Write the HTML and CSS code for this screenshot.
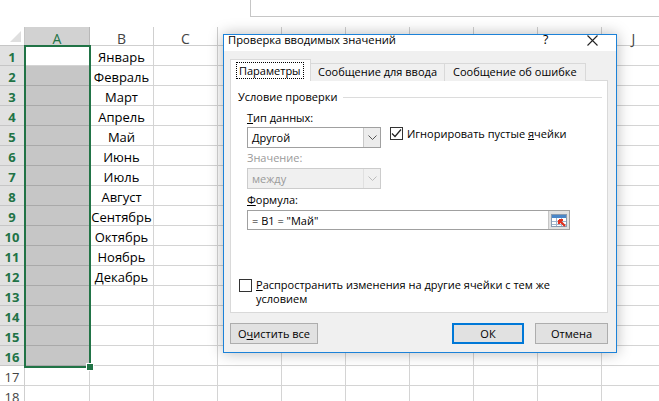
FILE: index.html
```html
<!DOCTYPE html>
<html lang="ru">
<head>
<meta charset="utf-8">
<title>Проверка вводимых значений</title>
<link rel="stylesheet" href="styles.css">
</head>
<body>
<div class="sheet">
  <div class="fbar-area"><div class="fbar"></div></div>
  <div class="grid">
    <div class="row hdr">
      <div class="corner"><span class="tri"></span></div>
      <div class="ch cola sel">A</div><div class="ch">B</div><div class="ch">C</div><div class="ch">D</div><div class="ch">E</div><div class="ch">F</div><div class="ch">G</div><div class="ch">H</div><div class="ch">I</div><div class="ch">J</div>
    </div>
    <div class="row"><div class="rh sel">1</div><div class="c cola"></div><div class="c b">Январь</div><div class="c"></div><div class="c"></div><div class="c"></div><div class="c"></div><div class="c"></div><div class="c"></div><div class="c"></div><div class="c"></div></div>
    <div class="row"><div class="rh sel">2</div><div class="c cola fill"></div><div class="c b">Февраль</div><div class="c"></div><div class="c"></div><div class="c"></div><div class="c"></div><div class="c"></div><div class="c"></div><div class="c"></div><div class="c"></div></div>
    <div class="row"><div class="rh sel">3</div><div class="c cola fill"></div><div class="c b">Март</div><div class="c"></div><div class="c"></div><div class="c"></div><div class="c"></div><div class="c"></div><div class="c"></div><div class="c"></div><div class="c"></div></div>
    <div class="row"><div class="rh sel">4</div><div class="c cola fill"></div><div class="c b">Апрель</div><div class="c"></div><div class="c"></div><div class="c"></div><div class="c"></div><div class="c"></div><div class="c"></div><div class="c"></div><div class="c"></div></div>
    <div class="row"><div class="rh sel">5</div><div class="c cola fill"></div><div class="c b">Май</div><div class="c"></div><div class="c"></div><div class="c"></div><div class="c"></div><div class="c"></div><div class="c"></div><div class="c"></div><div class="c"></div></div>
    <div class="row"><div class="rh sel">6</div><div class="c cola fill"></div><div class="c b">Июнь</div><div class="c"></div><div class="c"></div><div class="c"></div><div class="c"></div><div class="c"></div><div class="c"></div><div class="c"></div><div class="c"></div></div>
    <div class="row"><div class="rh sel">7</div><div class="c cola fill"></div><div class="c b">Июль</div><div class="c"></div><div class="c"></div><div class="c"></div><div class="c"></div><div class="c"></div><div class="c"></div><div class="c"></div><div class="c"></div></div>
    <div class="row"><div class="rh sel">8</div><div class="c cola fill"></div><div class="c b">Август</div><div class="c"></div><div class="c"></div><div class="c"></div><div class="c"></div><div class="c"></div><div class="c"></div><div class="c"></div><div class="c"></div></div>
    <div class="row"><div class="rh sel">9</div><div class="c cola fill"></div><div class="c b">Сентябрь</div><div class="c"></div><div class="c"></div><div class="c"></div><div class="c"></div><div class="c"></div><div class="c"></div><div class="c"></div><div class="c"></div></div>
    <div class="row"><div class="rh sel">10</div><div class="c cola fill"></div><div class="c b">Октябрь</div><div class="c"></div><div class="c"></div><div class="c"></div><div class="c"></div><div class="c"></div><div class="c"></div><div class="c"></div><div class="c"></div></div>
    <div class="row"><div class="rh sel">11</div><div class="c cola fill"></div><div class="c b">Ноябрь</div><div class="c"></div><div class="c"></div><div class="c"></div><div class="c"></div><div class="c"></div><div class="c"></div><div class="c"></div><div class="c"></div></div>
    <div class="row"><div class="rh sel">12</div><div class="c cola fill"></div><div class="c b">Декабрь</div><div class="c"></div><div class="c"></div><div class="c"></div><div class="c"></div><div class="c"></div><div class="c"></div><div class="c"></div><div class="c"></div></div>
    <div class="row"><div class="rh sel">13</div><div class="c cola fill"></div><div class="c b"></div><div class="c"></div><div class="c"></div><div class="c"></div><div class="c"></div><div class="c"></div><div class="c"></div><div class="c"></div><div class="c"></div></div>
    <div class="row"><div class="rh sel">14</div><div class="c cola fill"></div><div class="c b"></div><div class="c"></div><div class="c"></div><div class="c"></div><div class="c"></div><div class="c"></div><div class="c"></div><div class="c"></div><div class="c"></div></div>
    <div class="row"><div class="rh sel">15</div><div class="c cola fill"></div><div class="c b"></div><div class="c"></div><div class="c"></div><div class="c"></div><div class="c"></div><div class="c"></div><div class="c"></div><div class="c"></div><div class="c"></div></div>
    <div class="row"><div class="rh sel">16</div><div class="c cola fill last"></div><div class="c b"></div><div class="c"></div><div class="c"></div><div class="c"></div><div class="c"></div><div class="c"></div><div class="c"></div><div class="c"></div><div class="c"></div></div>
    <div class="row"><div class="rh">17</div><div class="c cola"></div><div class="c b"></div><div class="c"></div><div class="c"></div><div class="c"></div><div class="c"></div><div class="c"></div><div class="c"></div><div class="c"></div><div class="c"></div></div>
    <div class="row"><div class="rh">18</div><div class="c cola"></div><div class="c b"></div><div class="c"></div><div class="c"></div><div class="c"></div><div class="c"></div><div class="c"></div><div class="c"></div><div class="c"></div><div class="c"></div></div>
  </div>
  <div class="selection"><span class="handle"></span></div>

  <div class="dialog">
    <div class="titlebar">
      <span class="title">Проверка вводимых значений</span>
      <span class="help">?</span>
      <svg class="close" width="11" height="11" viewBox="0 0 11 11"><path d="M0.5 0.5 L10.5 10.5 M10.5 0.5 L0.5 10.5" stroke="#222" stroke-width="1.1" fill="none"/></svg>
    </div>
    <div class="body">
      <div class="tabs">
        <div class="tab active"><span class="focus">Параметры</span></div>
        <div class="tab t2">Сообщение для ввода</div>
        <div class="tab t3">Сообщение об ошибке</div>
      </div>
      <div class="panel">
        <div class="group-title"><span>Условие проверки</span><span class="gline"></span></div>
        <div class="fields">
          <div class="lbl"><u>Т</u>ип данных:</div>
          <div class="line1">
            <div class="select"><span class="val">Другой</span><span class="dd"><svg width="9" height="5" viewBox="0 0 9 5"><path d="M0.5 0.5 L4.5 4.5 L8.5 0.5" stroke="#555" stroke-width="1" fill="none"/></svg></span></div>
            <div class="chk-row"><span class="chk"><svg width="11" height="11" viewBox="0 0 11 11"><path d="M1 5.5 L4 8.5 L10 1.5" stroke="#222" stroke-width="1.2" fill="none"/></svg></span><span>Игнорировать пустые <u>я</u>чейки</span></div>
          </div>
          <div class="lbl dis">Значение:</div>
          <div class="select disabled"><span class="val">между</span><span class="dd"><svg width="9" height="5" viewBox="0 0 9 5"><path d="M0.5 0.5 L4.5 4.5 L8.5 0.5" stroke="#bcbcbc" stroke-width="1" fill="none"/></svg></span></div>
          <div class="lbl lbl3"><u>Ф</u>ормула:</div>
          <div class="input"><span class="val">= B1 = "Май"</span>
            <span class="rbtn"><svg width="16" height="13" viewBox="0 0 16 13">
              <rect x="0.5" y="0.5" width="15" height="12" fill="#fff" stroke="#8a9bb0"/>
              <rect x="1" y="1" width="14" height="3" fill="#4a86c8"/>
              <path d="M1 7.5 H15 M1 10.5 H15 M5.5 4 V12 M10.5 4 V12" stroke="#9fb4cc" stroke-width="1"/>
              <path d="M14 12 L8 6 M8 6 L8 10 M8 6 L12 6" stroke="#e0301e" stroke-width="2.2" fill="none"/>
            </svg></span>
          </div>
        </div>
        <div class="chk-row bottom"><span class="chk"></span><span class="long"><u>Р</u>аспространить изменения на другие ячейки с тем же условием</span></div>
      </div>
      <div class="buttons">
        <div class="btn clear">О<u>ч</u>истить все</div>
        <div class="spacer"></div>
        <div class="btn ok">ОК</div>
        <div class="btn cancel">Отмена</div>
      </div>
    </div>
  </div>
</div>
</body>
</html>
```

FILE: styles.css
```css
html, body {
  margin: 0;
  padding: 0;
  background: #fff;
}
.sheet {
  position: relative;
  width: 659px;
  height: 401px;
  overflow: hidden;
  background: #fff;
  font-family: "Open Sans", "Noto Sans", sans-serif;
}
.fbar-area {
  height: 27px;
  padding-left: 250px;
  box-sizing: border-box;
}
.fbar {
  height: 17px;
  box-sizing: border-box;
  border-left: 1px solid #c6c6c6;
  border-bottom: 1px solid #c6c6c6;
}
.grid {
  display: flex;
  flex-direction: column;
  width: 700px;
}
.row {
  display: flex;
  height: 20px;
}
.row.hdr {
  height: 19px;
}
.row > div {
  box-sizing: border-box;
  width: 64px;
  flex: none;
  border-right: 1px solid #d4d4d4;
  border-bottom: 1px solid #d4d4d4;
}
.row > .corner, .row > .rh {
  width: 25px;
}
.row > .cola {
  width: 65px;
}
.corner {
  position: relative;
  border-color: #c6c6c6 !important;
}
.tri {
  position: absolute;
  right: 3px;
  bottom: 3px;
  width: 0;
  height: 0;
  border-left: 11px solid transparent;
  border-bottom: 11px solid #dfdfdf;
}
.ch {
  text-align: center;
  font-size: 14px;
  line-height: 16px;
  padding-top: 4px;
  color: #444;
  border-color: #cfcfcf !important;
}
.ch.sel {
  background: #d2d2d2;
  color: #217346;
  border-right-color: #b8b8b8 !important;
}
.rh {
  text-align: center;
  font-size: 13px;
  line-height: 19px;
  padding-top: 2px;
  color: #444;
  border-color: #cfcfcf !important;
}
.rh.sel {
  background: #e1e1e1;
  color: #217346;
  font-weight: 700;
  border-bottom-color: #c6c6c6 !important;
}
.c.b {
  text-align: center;
  font-size: 13px;
  line-height: 19px;
  padding-top: 2px;
  color: #000;
  white-space: nowrap;
  overflow: visible;
}
.c.fill {
  background: #c6c6c6;
  border-bottom-color: #a9a9a9;
}
.selection {
  position: absolute;
  left: 24px;
  top: 45px;
  width: 67px;
  height: 323px;
  box-sizing: border-box;
  border: 2px solid #217346;
}
.handle {
  position: absolute;
  right: -5px;
  bottom: -5px;
  width: 6px;
  height: 6px;
  background: #217346;
  border: 1px solid #fff;
}

/* dialog */
.dialog {
  position: absolute;
  left: 223px;
  top: 34px;
  width: 394px;
  height: 319px;
  box-sizing: border-box;
  border: 1px solid #1c82d8;
  background: #f0f0f0;
  box-shadow: 0 0 14px rgba(0, 0, 0, 0.28);
  font-family: "Open Sans", "Noto Sans", sans-serif;
  font-size: 11px;
  color: #000;
  display: flex;
  flex-direction: column;
}
.titlebar {
  height: 16px;
  background: #fff;
  display: flex;
  align-items: flex-start;
  padding-left: 4px;
  line-height: 11px;
  font-size: 11.2px;
  padding-top: 0;
}
.title {
  flex: 1;
  margin-top: -1px;
}
.help {
  width: 12px;
  margin-right: 32px;
  font-size: 12.5px;
  margin-top: -1px;
}
.close {
  margin-right: 18px;
  margin-top: 0;
}
.body {
  flex: 1;
  padding: 8px 8px 0 6px;
  display: flex;
  flex-direction: column;
}
.tabs {
  display: flex;
  align-items: flex-end;
  height: 22px;
  margin-bottom: -1px;
  position: relative;
  z-index: 1;
}
.tab {
  box-sizing: border-box;
  height: 18px;
  line-height: 16px;
  padding: 0 6px;
  border: 1px solid #d9d9d9;
  border-bottom: none;
  background: #f0f0f0;
  white-space: nowrap;
}
.tab.active {
  height: 22px;
  width: 81px;
  background: #fff;
  padding: 4px 6px 0;
  line-height: 13px;
}
.focus {
  outline: 1px dotted #000;
  outline-offset: 0;
  padding: 0 2px;
}
.tab.t2 {
  width: 134px;
  border-left: none;
  padding-left: 7px;
}
.tab.t3 {
  width: 141px;
  border-left: none;
  padding-left: 8px;
}
.panel {
  box-sizing: border-box;
  height: 233px;
  background: #fff;
  border: 1px solid #d9d9d9;
  padding: 7px 6px 0 7px;
  display: flex;
  flex-direction: column;
}
.group-title {
  display: flex;
  align-items: center;
  height: 18px;
  line-height: 18px;
}
.gline {
  flex: 1;
  height: 1px;
  background: #dcdcdc;
  margin-left: 6px;
  margin-right: -1px;
}
.fields {
  padding-left: 9px;
  display: flex;
  flex-direction: column;
}
.lbl {
  line-height: 16px;
  margin-top: 4px;
}
.lbl.dis {
  color: #9a9a9a;
  margin-top: 2px;
}
.lbl.lbl3 {
  margin-top: 3px;
}
.line1 {
  display: flex;
  align-items: flex-start;
  margin-top: 1px;
}
.select {
  box-sizing: border-box;
  width: 134px;
  height: 21px;
  border: 1px solid #a0a0a0;
  background: #fff;
  display: flex;
  align-items: center;
  margin-top: 0;
}
.select .val {
  flex: 1;
  padding-left: 4px;
}
.dd {
  width: 17px;
  height: 19px;
  box-sizing: border-box;
  border-left: 1px solid #c9c9c9;
  background: #ececec;
  display: flex;
  align-items: center;
  justify-content: center;
}
.select.disabled {
  border-color: #cccccc;
  background: #f0f0f0;
  color: #9a9a9a;
  margin-top: 2px;
}
.select.disabled .dd {
  border-left-color: #e0e0e0;
  background: #f0f0f0;
}
.chk-row {
  display: flex;
  align-items: flex-start;
  margin-left: 9px;
}
.chk {
  box-sizing: border-box;
  width: 13px;
  height: 13px;
  border: 1px solid #333;
  background: #fff;
  flex: none;
  display: flex;
  align-items: center;
  justify-content: center;
  margin-right: 4px;
}
.line1 .chk-row span:last-child {
  line-height: 13px;
}
.input {
  box-sizing: border-box;
  width: 323px;
  height: 20px;
  margin-top: 2px;
  border: 1px solid #a0a0a0;
  background: #fff;
  display: flex;
  align-items: center;
}
.input .val {
  flex: 1;
  padding-left: 4px;
}
.rbtn {
  width: 20px;
  height: 18px;
  background: #e1e1e1;
  border-left: 1px solid #c6c6c6;
  display: flex;
  align-items: center;
  justify-content: center;
}
.chk-row.bottom {
  margin-left: 1px;
  margin-top: 48px;
}
.chk-row.bottom .chk {
  margin-top: 1px;
}
.long {
  line-height: 14px;
  width: 310px;
}
.buttons {
  display: flex;
  margin-top: 10px;
  height: 21px;
  padding-right: 0;
}
.spacer {
  flex: 1;
}
.btn {
  box-sizing: border-box;
  height: 21px;
  border: 1px solid #adadad;
  background: #e1e1e1;
  text-align: center;
  line-height: 19px;
}
.btn.clear {
  width: 88px;
}
.btn.ok {
  width: 72px;
  border: 2px solid #0078d7;
  line-height: 17px;
}
.btn.cancel {
  width: 73px;
  margin-left: 11px;
}
```
